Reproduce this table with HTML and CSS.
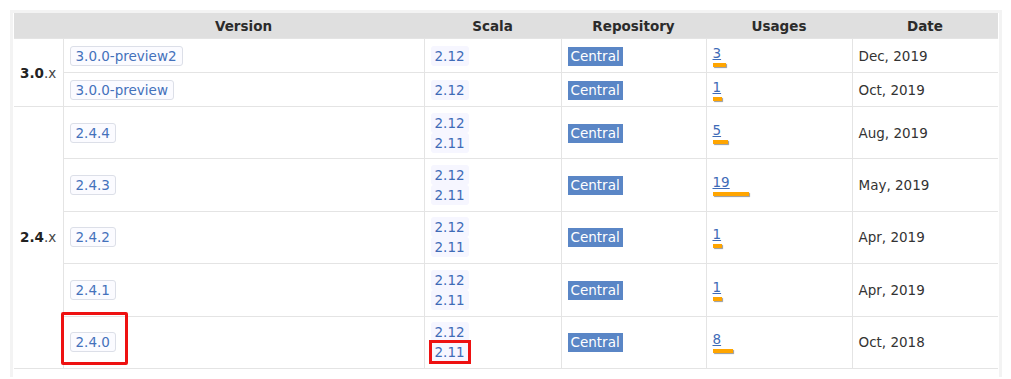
FILE: index.html
```html
<!DOCTYPE html>
<html>
<head>
<meta charset="utf-8">
<link rel="stylesheet" href="styles.css">
</head>
<body>
<div class="frame">
<table class="grid">
  <colgroup>
    <col class="c-major"><col class="c-ver"><col class="c-scala"><col class="c-repo"><col class="c-use"><col class="c-date">
  </colgroup>
  <thead>
    <tr><th></th><th>Version</th><th>Scala</th><th>Repository</th><th>Usages</th><th>Date</th></tr>
  </thead>
  <tbody>
    <tr class="small">
      <td rowspan="2" class="major"><b>3.0</b>.x</td>
      <td><a class="vbadge">3.0.0-preview2</a></td>
      <td><a class="sbadge">2.12</a></td>
      <td><span class="repo">Central</span></td>
      <td><a class="num">3</a><span class="bar" style="width:13px"></span></td>
      <td class="date">Dec, 2019</td>
    </tr>
    <tr class="small">
      <td><a class="vbadge">3.0.0-preview</a></td>
      <td><a class="sbadge">2.12</a></td>
      <td><span class="repo">Central</span></td>
      <td><a class="num">1</a><span class="bar" style="width:9px"></span></td>
      <td class="date">Oct, 2019</td>
    </tr>
    <tr class="big">
      <td rowspan="5" class="major"><b>2.4</b>.x</td>
      <td><a class="vbadge">2.4.4</a></td>
      <td><a class="sbadge">2.12</a><a class="sbadge">2.11</a></td>
      <td><span class="repo">Central</span></td>
      <td><a class="num">5</a><span class="bar" style="width:15px"></span></td>
      <td class="date">Aug, 2019</td>
    </tr>
    <tr class="big">
      <td><a class="vbadge">2.4.3</a></td>
      <td><a class="sbadge">2.12</a><a class="sbadge">2.11</a></td>
      <td><span class="repo">Central</span></td>
      <td><a class="num">19</a><span class="bar" style="width:36px"></span></td>
      <td class="date">May, 2019</td>
    </tr>
    <tr class="big">
      <td><a class="vbadge">2.4.2</a></td>
      <td><a class="sbadge">2.12</a><a class="sbadge">2.11</a></td>
      <td><span class="repo">Central</span></td>
      <td><a class="num">1</a><span class="bar" style="width:9px"></span></td>
      <td class="date">Apr, 2019</td>
    </tr>
    <tr class="big">
      <td><a class="vbadge">2.4.1</a></td>
      <td><a class="sbadge">2.12</a><a class="sbadge">2.11</a></td>
      <td><span class="repo">Central</span></td>
      <td><a class="num">1</a><span class="bar" style="width:9px"></span></td>
      <td class="date">Apr, 2019</td>
    </tr>
    <tr class="big">
      <td><a class="vbadge marked">2.4.0</a></td>
      <td><a class="sbadge">2.12</a><a class="sbadge boxed">2.11</a></td>
      <td><span class="repo">Central</span></td>
      <td><a class="num">8</a><span class="bar" style="width:20px"></span></td>
      <td class="date">Oct, 2018</td>
    </tr>
  </tbody>
</table>
</div>
</body>
</html>
```
FILE: styles.css
```css
html, body {
  margin: 0;
  padding: 0;
  background: #ffffff;
}
body {
  font-family: "DejaVu Sans", Verdana, sans-serif;
  font-size: 13.5px;
  color: #333333;
  padding: 10px 0 0 10px;
}
.frame {
  width: 985px;
  border: 3px solid #f3f3f3;
  border-bottom: none;
  padding: 0 0 8px 1px;
}
.grid {
  border-collapse: collapse;
  width: 984px;
  table-layout: fixed;
}
.c-major { width: 49px; }
.c-ver { width: 361px; }
.c-scala { width: 137px; }
.c-repo { width: 145px; }
.c-use { width: 146px; }
.c-date { width: 146px; }

.grid th {
  background: #dfdfdf;
  height: 25px;
  padding: 0;
  font-weight: bold;
  color: #2b2b2b;
  text-align: center;
  vertical-align: middle;
  border: none;
}
.grid td {
  border: 1px solid #e4e4e4;
  padding: 0 6px;
  vertical-align: middle;
  text-align: left;
  line-height: 20px;
}
.grid tbody tr td:first-child.major { border-left: none; }
.grid tbody tr td:last-child { border-right: none; }
.grid tbody tr:last-child td { border-bottom: 1px solid #e4e4e4; }
.small td { height: 34px; box-sizing: border-box; }
.big td { height: 52.4px; box-sizing: border-box; }

.major { color: #444; }
.major b { color: #222; }

.vbadge {
  display: inline-block;
  position: relative;
  color: #4471bb;
  background: #fbfbff;
  border: 1px solid #dcdfe8;
  border-radius: 3px;
  padding: 0 5px;
  line-height: 18px;
}
.marked::after {
  content: "";
  position: absolute;
  left: -10px;
  right: -13px;
  top: -21px;
  bottom: -14px;
  border: 3px solid #ee1111;
  border-radius: 2px;
}
.sbadge {
  display: block;
  width: fit-content;
  color: #3f6bb7;
  background: #f6f6ff;
  padding: 0 4px;
  line-height: 20px;
  border-radius: 3px;
}
.boxed {
  outline: 3px solid #ee1111;
  outline-offset: -1px;
  border-radius: 0;
}
.repo {
  display: inline-block;
  background: #5a86c6;
  color: #ffffff;
  padding: 0 3px;
  line-height: 19px;
}
.num {
  display: block;
  color: #3f6bb7;
  text-decoration: underline;
  line-height: 16px;
}
.bar {
  display: block;
  height: 4px;
  margin-top: 2px;
  background: #ffa500;
  box-shadow: 1px 1px 1px #999999;
}
.date { color: #333333; }
```
